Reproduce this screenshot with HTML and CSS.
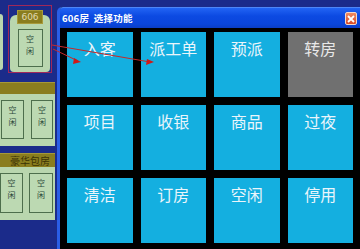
FILE: index.html
```html
<!DOCTYPE html>
<html>
<head>
<meta charset="utf-8">
<link rel="stylesheet" href="styles.css">
</head>
<body>
<div class="screen">
  <aside class="rooms">
    <div class="floor-top">
      <div class="card-edge"></div>
      <div class="selected">
        <div class="card">
          <div class="tag">606</div>
          <div class="room-box top-box">空<br>闲</div>
        </div>
      </div>
    </div>
    <div class="bar"></div>
    <div class="panel p1">
      <div class="room-box w23">空<br>闲</div>
      <div class="room-box w22">空<br>闲</div>
    </div>
    <div class="bar label">豪华包房</div>
    <div class="panel p2">
      <div class="room-box w23">空<br>闲</div>
      <div class="room-box w24">空<br>闲</div>
    </div>
  </aside>
  <section class="window">
    <header class="titlebar">
      <span class="title">606房&nbsp;&nbsp;选择功能</span>
      <span class="close"><svg width="8" height="8" viewBox="0 0 8 8"><path d="M1 1L7 7M7 1L1 7" stroke="#fff" stroke-width="1.8"/></svg></span>
    </header>
    <div class="grid">
      <div class="tile">入客</div>
      <div class="tile">派工单</div>
      <div class="tile">预派</div>
      <div class="tile gray">转房</div>
      <div class="tile">项目</div>
      <div class="tile">收银</div>
      <div class="tile">商品</div>
      <div class="tile">过夜</div>
      <div class="tile">清洁</div>
      <div class="tile">订房</div>
      <div class="tile">空闲</div>
      <div class="tile">停用</div>
    </div>
  </section>
  <svg class="arrows" width="360" height="249" viewBox="0 0 360 249">
    <line x1="53" y1="49" x2="78" y2="61" stroke="#c82828" stroke-width="1"/>
    <polygon points="74,58 81,62 73,64" fill="#d01818"/>
    <line x1="52" y1="45" x2="150" y2="62" stroke="#c82828" stroke-width="1"/>
    <polygon points="147,59 154,62 146,65" fill="#d01818"/>
  </svg>
</div>
</body>
</html>
```
FILE: styles.css
```css
html, body {
  margin: 0;
  padding: 0;
  background: #1b2b8a;
  overflow: hidden;
}
.screen {
  position: relative;
  width: 360px;
  height: 249px;
  display: flex;
  font-family: "Noto Sans CJK SC", "Noto Sans", sans-serif;
}
.rooms {
  width: 55px;
  margin-right: 2px;
  display: flex;
  flex-direction: column;
}
.floor-top {
  height: 82px;
  display: flex;
  align-items: flex-start;
}
.card-edge {
  width: 3px;
  height: 56px;
  margin-top: 14px;
  background: #b9d6ae;
  border-radius: 0 5px 5px 0;
}
.selected {
  margin-left: 5px;
  margin-top: 5px;
  width: 42px;
  height: 66px;
  border: 1px solid #a0285a;
  display: flex;
  justify-content: center;
}
.card {
  margin-top: 9px;
  width: 40px;
  height: 57px;
  background: #b9d6ae;
  border-radius: 6px 6px 4px 4px;
  display: flex;
  flex-direction: column;
  align-items: center;
}
.tag {
  margin-top: -5px;
  width: 24px;
  height: 12px;
  background: #8a7d1e;
  border: 1px solid #a89a3a;
  color: #e0d8b0;
  font-family: "DejaVu Sans", sans-serif;
  font-size: 9px;
  line-height: 12px;
  text-align: center;
}
.room-box {
  box-sizing: border-box;
  border: 1px solid #4d6e4c;
  color: #2c4a3a;
  font-size: 8px;
  line-height: 12px;
  text-align: center;
  padding-top: 3px;
  background: #bcd9b2;
}
.top-box {
  margin-top: 5px;
  width: 25px;
  height: 38px;
  line-height: 12px;
  padding-top: 3px;
}
.bar {
  height: 12px;
  background: #8a7d1e;
  border-top: 1px solid #a69838;
  box-sizing: border-box;
}
.bar.label {
  height: 14px;
  margin-top: 7px;
  color: #3a3205;
  font-size: 10px;
  line-height: 13px;
  text-align: right;
  padding-right: 5px;
}
.panel {
  background: #b9d6ae;
  display: flex;
  align-items: flex-start;
}
.p1 {
  height: 52px;
  padding: 6px 2px 0 1px;
  gap: 7px;
  box-sizing: border-box;
}
.p1 .room-box { height: 39px; }
.p2 {
  height: 53px;
  padding: 6px 2px 0 0;
  gap: 6px;
  box-sizing: border-box;
}
.p2 .room-box { height: 40px; }
.w22 { width: 22px; }
.w23 { width: 23px; }
.w24 { width: 24px; }

.window {
  flex: 1;
  margin-top: 7px;
  display: flex;
  flex-direction: column;
  background: #000;
  border-left: 3px solid #2a5ee6;
  border-top-left-radius: 5px;
}
.titlebar {
  height: 21px;
  box-sizing: border-box;
  border-top: 1px solid #4f86f6;
  background: linear-gradient(#2264f4, #0c4ae2 40%, #0a46dc 80%, #0a3ec6);
  display: flex;
  align-items: center;
  justify-content: space-between;
  padding: 0 3px 0 2px;
  border-top-left-radius: 3px;
}
.title {
  color: #fff;
  font-size: 9.5px;
  font-weight: bold;
  letter-spacing: 0.2px;
  margin-top: -1px;
}
.close {
  width: 12px;
  height: 13px;
  box-sizing: border-box;
  border: 1px solid #f4d8c8;
  border-radius: 2px;
  background: linear-gradient(#f08a60, #d84a28);
  display: flex;
  align-items: center;
  justify-content: center;
  margin-top: 1px;
}
.close svg { display: block; }
.grid {
  display: grid;
  grid-template-columns: repeat(4, 65.5px);
  grid-auto-rows: 65px;
  column-gap: 8px;
  row-gap: 8px;
  padding: 4px 0 0 7px;
}
.tile {
  background: #14afe0;
  color: #eaf5fb;
  font-size: 16px;
  line-height: 23px;
  text-align: center;
  padding-top: 5px;
  box-sizing: border-box;
}
.tile.gray {
  background: #707070;
  color: #e8e8e8;
}
.arrows {
  position: absolute;
  left: 0;
  top: 0;
  pointer-events: none;
}
```
